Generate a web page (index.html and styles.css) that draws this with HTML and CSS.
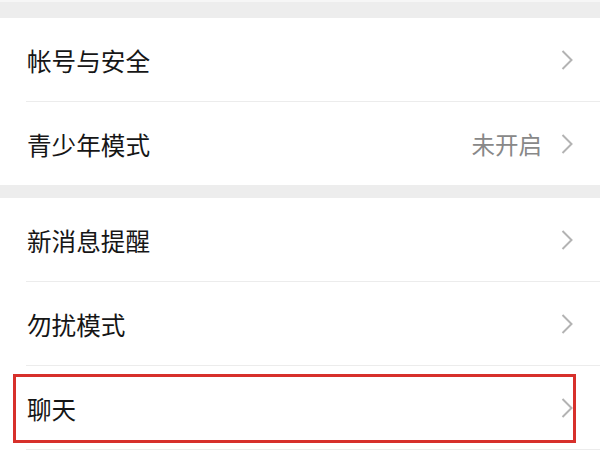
FILE: index.html
```html
<!DOCTYPE html>
<html lang="zh-CN">
<head>
<meta charset="utf-8">
<title>设置</title>
<link rel="stylesheet" href="styles.css">
</head>
<body>
<div class="page">
  <div class="band band-top"></div>
  <div class="group">
    <div class="row"><span class="label">帐号与安全</span><span class="spacer"></span><svg class="chev" viewBox="0 0 12 20"><polyline points="1.5,1 10.5,10 1.5,19"/></svg></div>
    <div class="divider"></div>
    <div class="row"><span class="label">青少年模式</span><span class="spacer"></span><span class="value">未开启</span><svg class="chev" viewBox="0 0 12 20"><polyline points="1.5,1 10.5,10 1.5,19"/></svg></div>
  </div>
  <div class="band band-mid"></div>
  <div class="group">
    <div class="row"><span class="label">新消息提醒</span><span class="spacer"></span><svg class="chev" viewBox="0 0 12 20"><polyline points="1.5,1 10.5,10 1.5,19"/></svg></div>
    <div class="divider"></div>
    <div class="row"><span class="label">勿扰模式</span><span class="spacer"></span><svg class="chev" viewBox="0 0 12 20"><polyline points="1.5,1 10.5,10 1.5,19"/></svg></div>
    <div class="divider"></div>
    <div class="row"><span class="label">聊天</span><span class="spacer"></span><svg class="chev" viewBox="0 0 12 20"><polyline points="1.5,1 10.5,10 1.5,19"/></svg></div>
    <div class="divider"></div>
  </div>
  <div class="highlight"></div>
</div>
</body>
</html>
```

FILE: styles.css
```css
html, body {
  margin: 0;
  padding: 0;
  background: #ffffff;
}
.page {
  position: relative;
  width: 600px;
  height: 450px;
  overflow: hidden;
  font-family: "Noto Sans CJK SC", "Noto Sans", sans-serif;
  color: #161616;
}
.band {
  background: #ededed;
}
.band-top {
  height: 16px;
  border-top: 2px solid #f6f6f6;
}
.band-mid {
  height: 13px;
}
.group {
  background: #ffffff;
}
.row {
  height: 83px;
  display: flex;
  align-items: center;
  padding: 0 27px 0 27px;
}
.label {
  font-size: 24.6px;
}
.spacer {
  flex: 1;
}
.value {
  font-size: 23.5px;
  color: #888888;
  margin-right: 19px;
}
.chev {
  width: 12px;
  height: 20px;
  fill: none;
  stroke: #b3b3b3;
  stroke-width: 2;
}
.divider {
  height: 1px;
  margin-left: 26px;
  background: #ececec;
}
.highlight {
  position: absolute;
  left: 13px;
  top: 374px;
  width: 563px;
  height: 69px;
  box-sizing: border-box;
  border: 3px solid #d7302b;
}
```
